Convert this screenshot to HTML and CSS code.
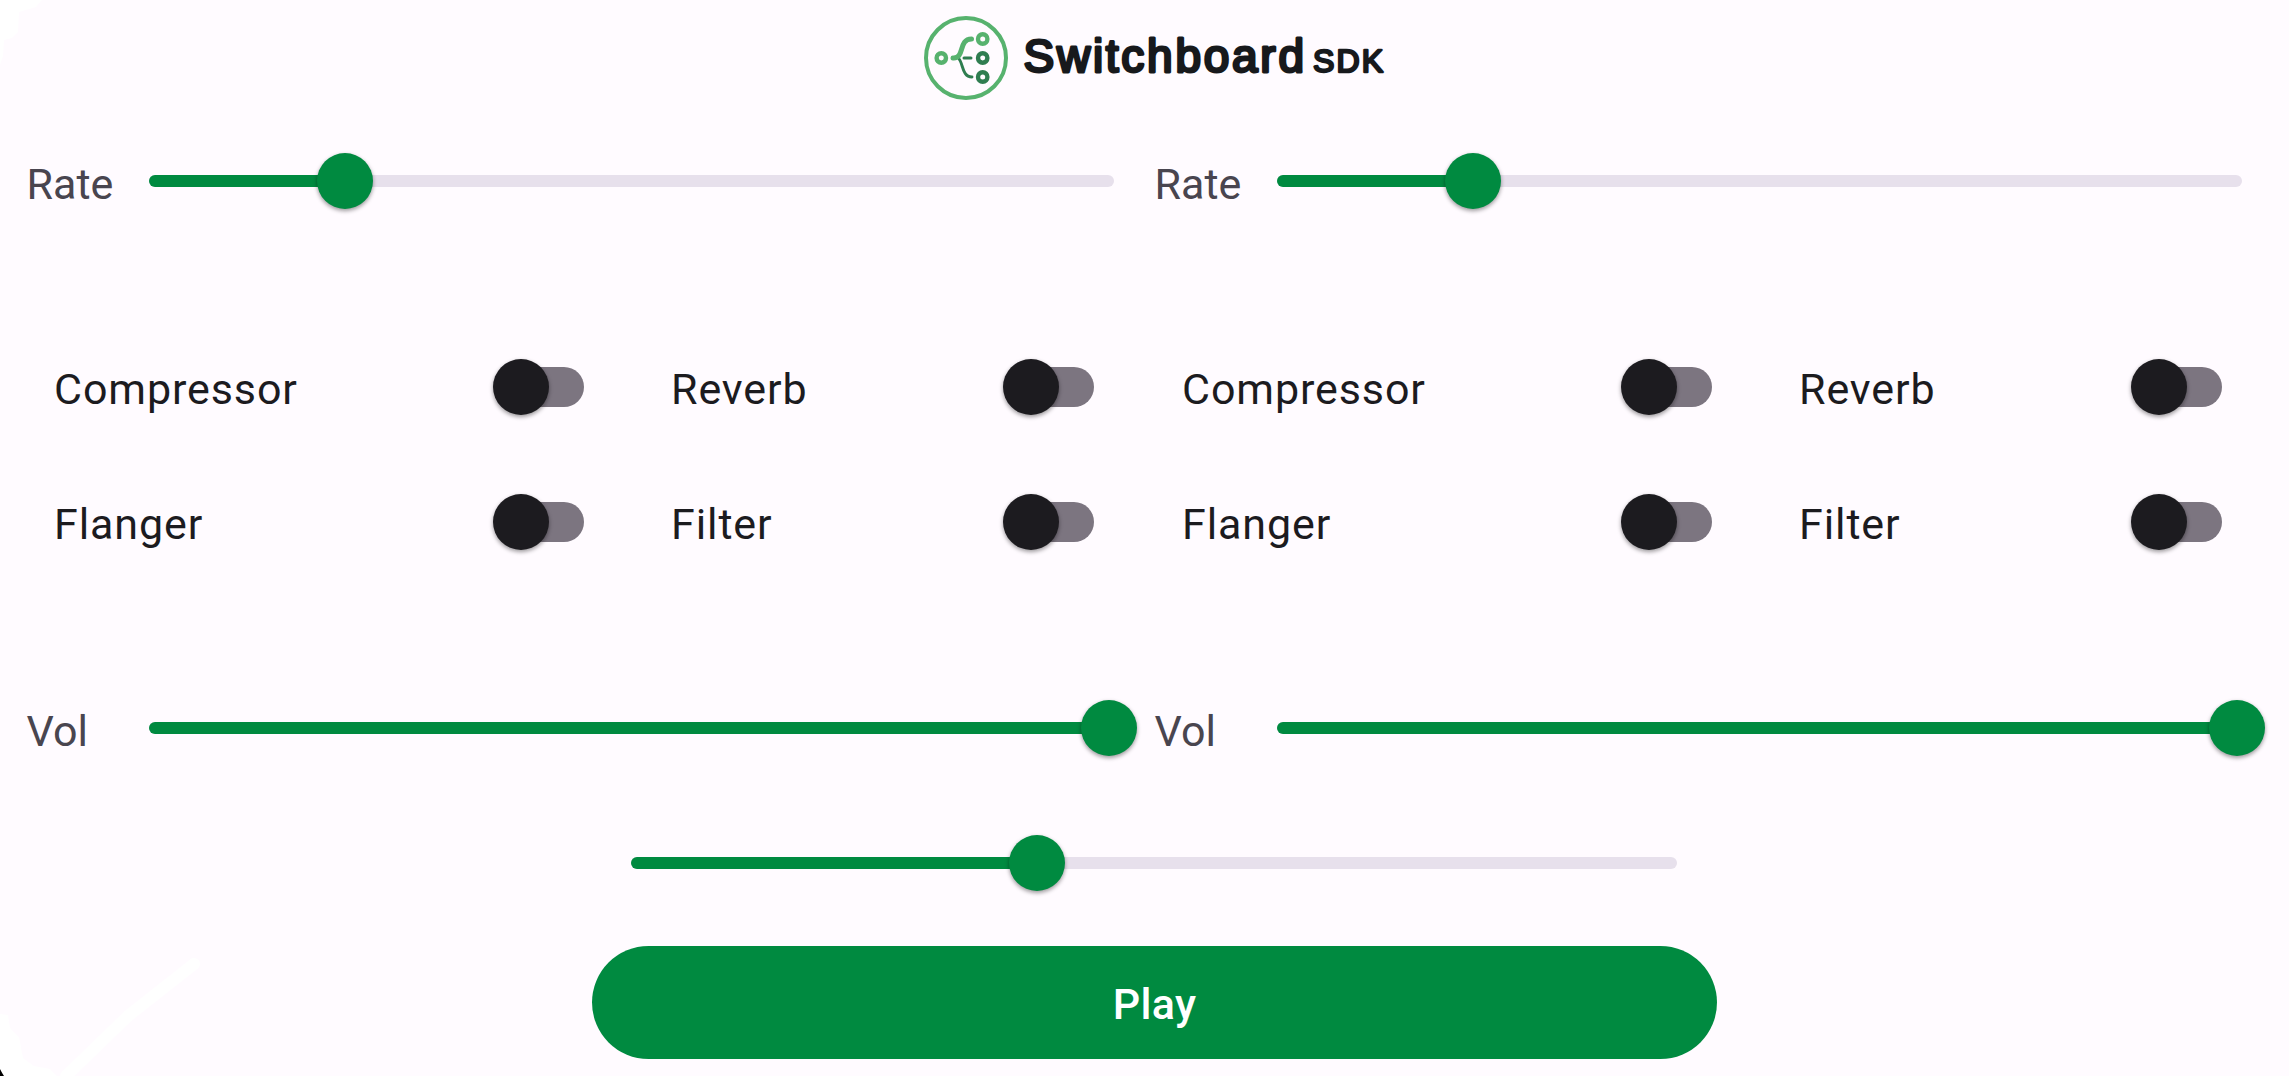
FILE: index.html
```html
<!DOCTYPE html>
<html lang="en">
<head>
<meta charset="utf-8">
<title>Switchboard SDK</title>
<link rel="stylesheet" href="styles.css">
</head>
<body>
<main class="app">
  <header class="brand">
    <svg class="brand-mark" viewBox="0 0 84 84" fill="none" stroke-linecap="round">
      <circle cx="42" cy="42" r="40" stroke="#57b26e" stroke-width="4"/>
      <path d="M35 43C39 47 38 61 48 61" stroke="#2f7d50" stroke-width="2.9"/>
      <path d="M40 42H47" stroke="#2f7d50" stroke-width="3"/>
      <path d="M29 42C41 43 34 23 47.500 23" stroke="#57b26e" stroke-width="5"/>
      <circle cx="17.300" cy="42" r="4.700" stroke="#57b26e" stroke-width="4.400"/>
      <circle cx="58.700" cy="23" r="4.700" stroke="#57b26e" stroke-width="4.400"/>
      <circle cx="58.700" cy="42" r="4.700" stroke="#2f7d50" stroke-width="4.400"/>
      <circle cx="58.700" cy="61" r="4.700" stroke="#2f7d50" stroke-width="4.400"/>
    </svg>
    <svg class="wordmark" viewBox="0 0 370 84">
      <text class="word" x="3.500" y="55.500" textLength="280.500" lengthAdjust="spacing">Switchboard</text>
      <text class="word word-small" x="293" y="56" textLength="70" lengthAdjust="spacing">SDK</text>
    </svg>
  </header>

  <div class="decks">
    <section class="deck">
      <div class="control"><span class="label">Rate</span><div class="slider"><div class="fill" style="width:20.300%"></div><div class="thumb"></div></div></div>
      <div class="effects">
        <div class="effect"><span>Compressor</span><div class="switch"></div></div>
        <div class="effect"><span>Reverb</span><div class="switch"></div></div>
        <div class="effect"><span>Flanger</span><div class="switch"></div></div>
        <div class="effect"><span>Filter</span><div class="switch"></div></div>
      </div>
      <div class="control"><span class="label">Vol</span><div class="slider"><div class="fill" style="width:99.500%"></div><div class="thumb"></div></div></div>
    </section>
    <section class="deck">
      <div class="control"><span class="label">Rate</span><div class="slider"><div class="fill" style="width:20.300%"></div><div class="thumb"></div></div></div>
      <div class="effects">
        <div class="effect"><span>Compressor</span><div class="switch"></div></div>
        <div class="effect"><span>Reverb</span><div class="switch"></div></div>
        <div class="effect"><span>Flanger</span><div class="switch"></div></div>
        <div class="effect"><span>Filter</span><div class="switch"></div></div>
      </div>
      <div class="control"><span class="label">Vol</span><div class="slider"><div class="fill" style="width:99.500%"></div><div class="thumb"></div></div></div>
    </section>
  </div>

  <div class="slider crossfader"><div class="fill" style="width:38.800%"></div><div class="thumb"></div></div>
  <button class="play">Play</button>

  <svg class="corner corner-top" viewBox="0 0 120 90">
    <path d="M0 0H42L36 7L19 12L18 32L12 38L4 40L3 56L0 65Z" fill="#fff"/>
  </svg>
  <svg class="corner corner-bottom" viewBox="0 0 220 146">
    <path d="M0 84L8 85L10 98L19 107L23 128L34 136L50 139L57 146H0Z" fill="#fff"/>
    <path d="M66 146L128 86L194 34" fill="none" stroke="#fff" stroke-width="12" stroke-linecap="round" stroke-linejoin="round"/>
    <path d="M0 139Q2 143 4 146H0Z" fill="#000"/>
  </svg>
</main>
</body>
</html>
```

FILE: styles.css
```css
* { box-sizing: border-box; }
body { margin: 0; background: #fffbff; font-family: Roboto, "Liberation Sans", sans-serif; }
.app {
  position: relative;
  width: 2289px;
  height: 1076px;
  overflow: hidden;
  display: flex;
  flex-direction: column;
  align-items: flex-start;
}
.brand { display: flex; gap: 12px; height: 125px; padding: 16px 0 0 924px; }
.brand-mark { width: 84px; height: 84px; }
.wordmark { width: 370px; height: 84px; }
.word {
  font: 400 46px "Liberation Sans", Arial, sans-serif;
  fill: #17191c;
  stroke: #17191c;
  stroke-width: 2.900px;
  stroke-linejoin: round;
}
.word-small { font-size: 32px; stroke-width: 2.400px; }

.decks { display: flex; height: 659px; }
.deck { width: 1128px; }
.control { display: flex; align-items: center; height: 112px; }
.label {
  width: 149px;
  padding: 6px 0 0 26.500px;
  font-size: 43px;
  line-height: 50px;
  color: #49454f;
}
.slider {
  display: flex;
  align-items: center;
  width: 965px;
  height: 11.500px;
  border-radius: 6px;
  background: #e7e0ec;
}
.fill { height: 100%; border-radius: 6px; background: #008a40; }
.thumb {
  flex: none;
  width: 56px;
  height: 56px;
  margin: 0 -28px;
  border-radius: 50%;
  background: #008a40;
  box-shadow: 0 2px 4px rgba(0, 0, 0, .4);
}
.effects {
  display: grid;
  grid-template-columns: 617px 510px;
  grid-auto-rows: 135px;
  height: 435px;
  padding-top: 82px;
}
.effect {
  display: flex;
  align-items: center;
  justify-content: space-between;
  padding: 0 33px 0 54px;
  font-size: 43px;
  line-height: 50px;
  letter-spacing: .9px;
  color: #1c1b1f;
}
.effect span { padding-top: 5px; }
.switch {
  display: flex;
  align-items: center;
  width: 82px;
  height: 40px;
  border-radius: 20px;
  background: #7c7580;
}
.switch::before {
  content: "";
  width: 56px;
  height: 56px;
  margin-left: -9px;
  border-radius: 50%;
  background: #1c1b1f;
  box-shadow: 0 2px 4px rgba(0, 0, 0, .4);
}
.crossfader { width: 1046px; margin: 73px 0 0 631px; }
.play {
  width: 1125px;
  height: 113px;
  margin: 77px 0 0 592px;
  padding: 3px 0 0;
  border: 0;
  border-radius: 57px;
  background: #008a40;
  color: #fff;
  font: 500 43px/50px Roboto, sans-serif;
  letter-spacing: .3px;
}
.corner { position: absolute; left: 0; }
.corner-top { top: 0; width: 120px; height: 90px; }
.corner-bottom { bottom: 0; width: 220px; height: 146px; }
```
